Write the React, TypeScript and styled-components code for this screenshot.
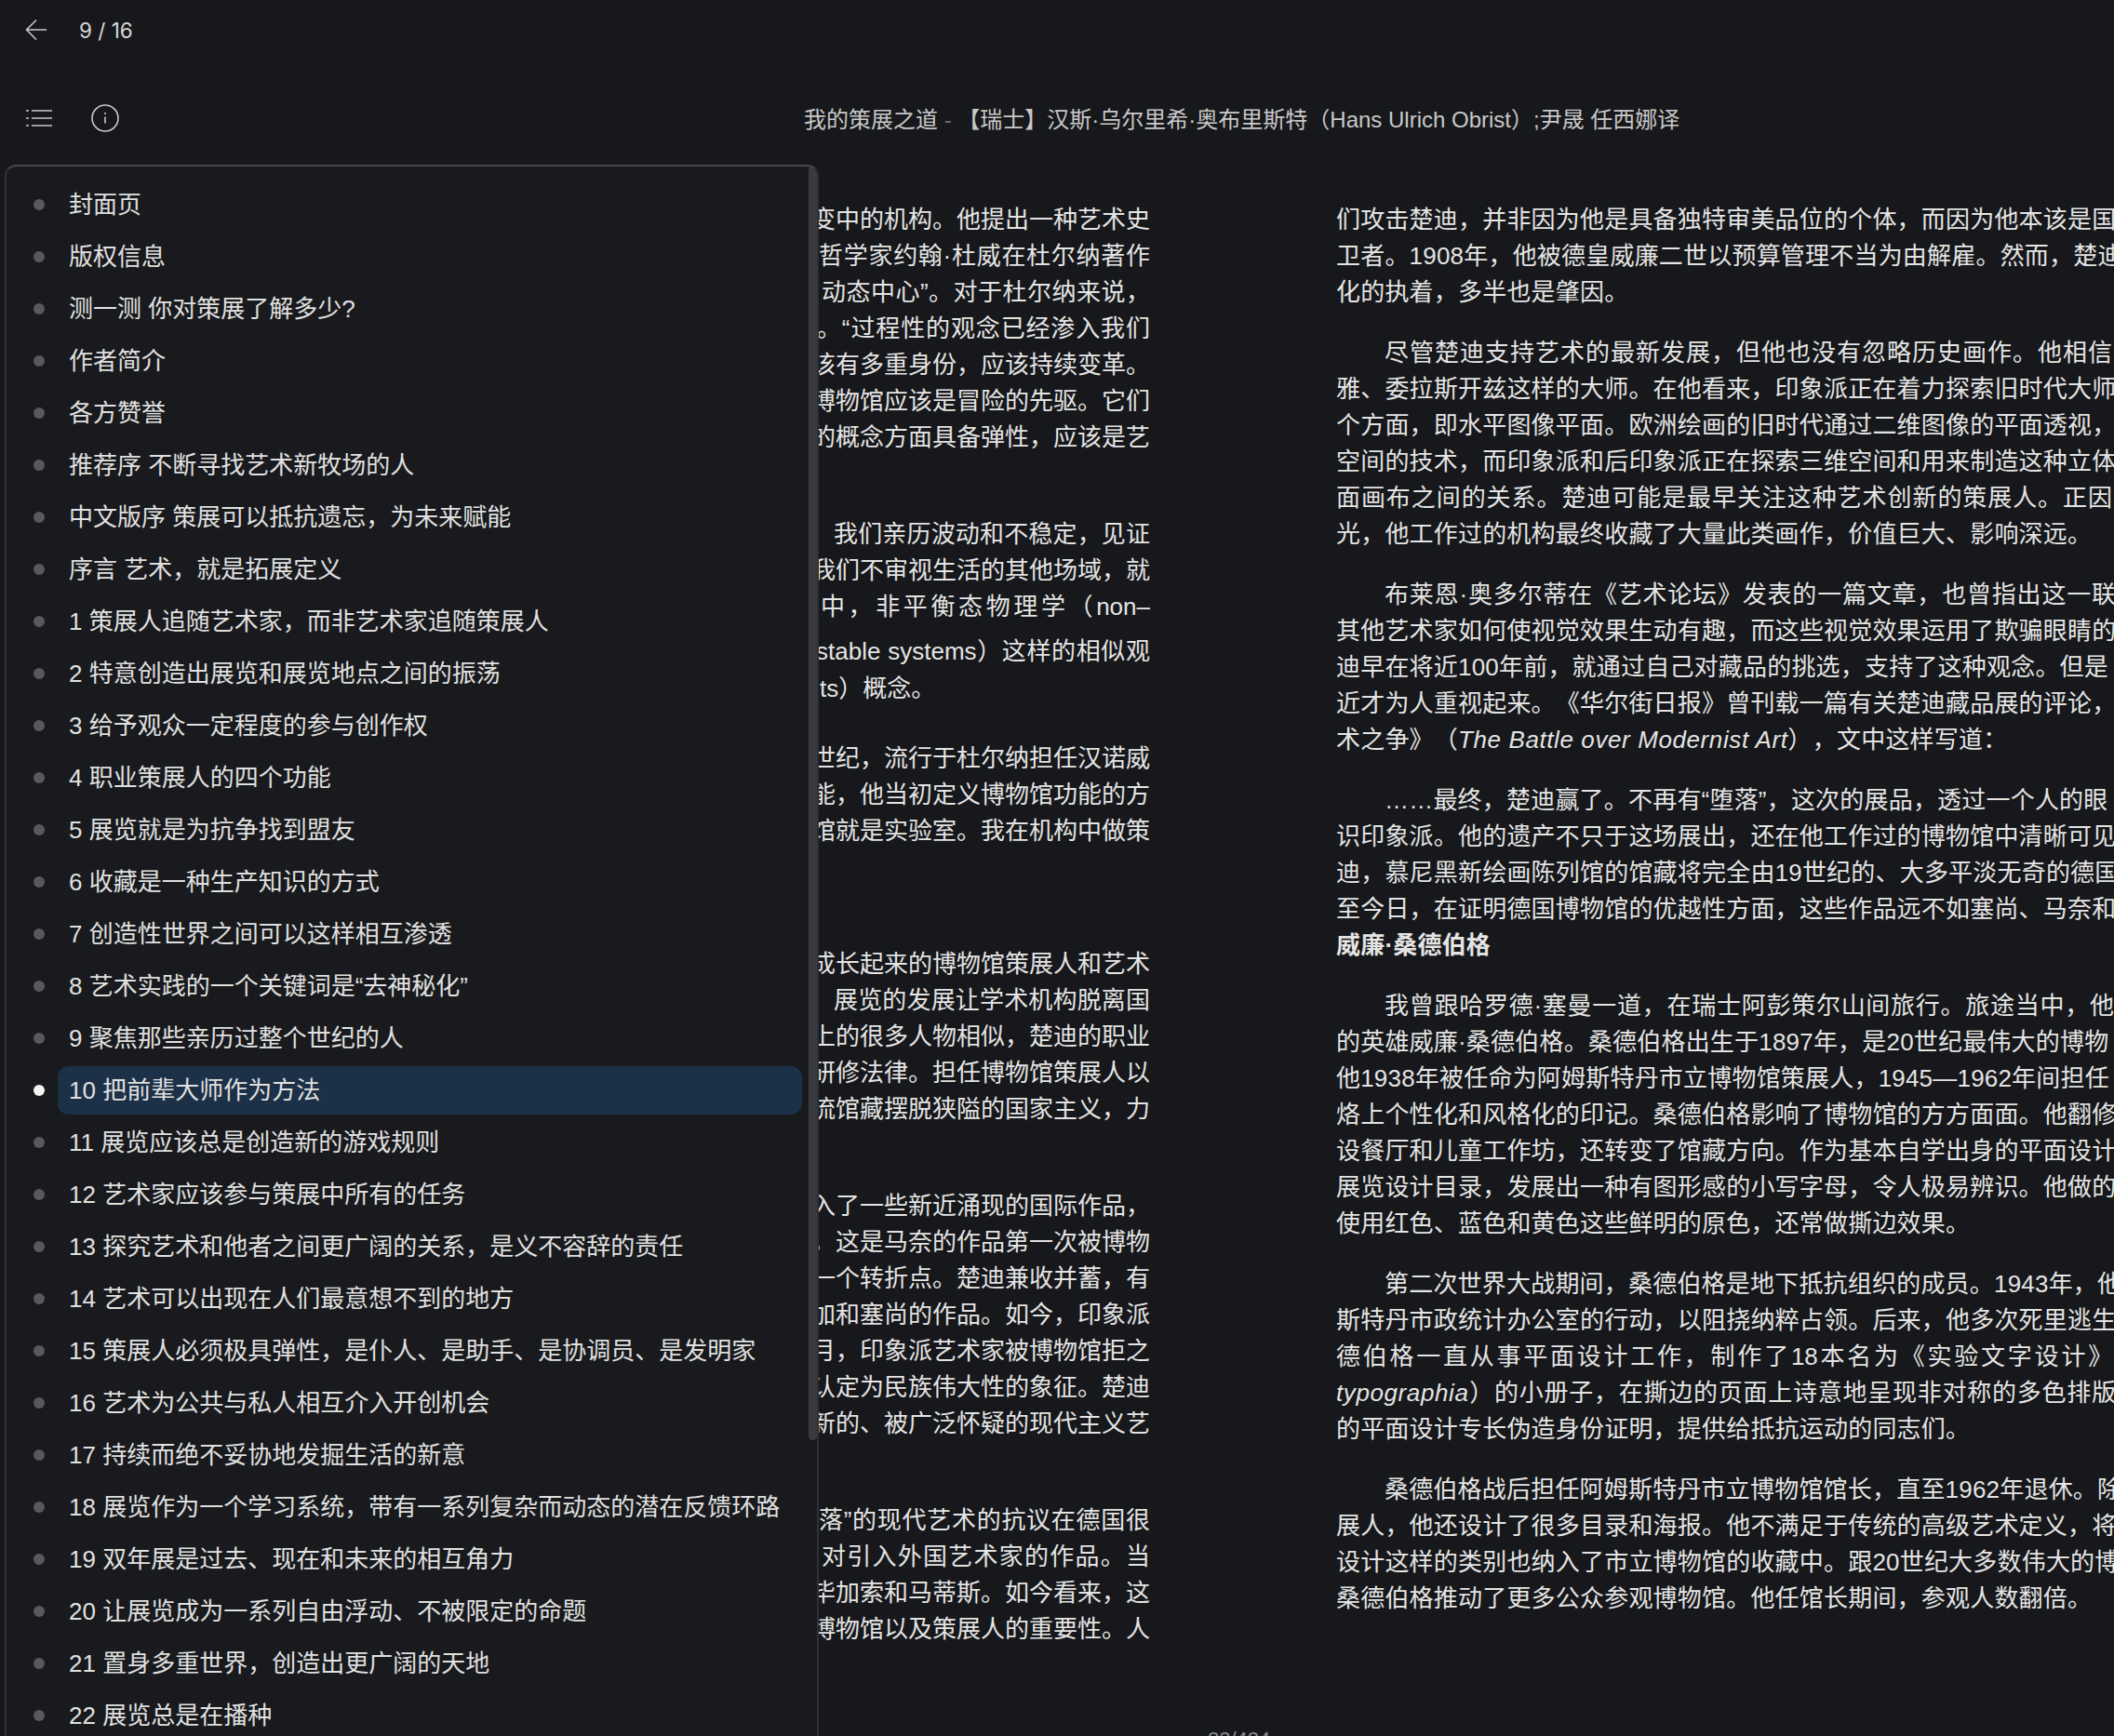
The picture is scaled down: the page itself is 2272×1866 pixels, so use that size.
import React from 'react';
import styled, { createGlobalStyle } from 'styled-components';

const Global = createGlobalStyle`
  html, body { margin: 0; padding: 0; background: #17181b; }
  body {
    font-family: "Liberation Sans", "Noto Sans CJK SC", sans-serif;
    text-spacing-trim: space-all;
    overflow: hidden;
  }
`;

const Page = styled.div`
  position: relative;
  width: 2272px;
  height: 1866px;
  overflow: hidden;
  background: #17181b;
  color: #e4e4e4;
`;

const TopBar = styled.header`
  height: 64px;
  display: flex;
  align-items: center;
  padding-left: 27px;
  gap: 34px;
`;

const PageCount = styled.span`
  font-family: "Inter", sans-serif;
  font-size: 22.5px;
  color: #d8d8d8;
`;

const ToolBar = styled.div`
  height: 64px;
  margin-top: 31px;
  display: flex;
  align-items: center;
  padding-left: 27px;
`;

const InfoWrap = styled.span`
  display: flex;
  margin-left: 41px;
`;

const Title = styled.h1`
  margin: -2px 0 0 736px;
  font-size: 24px;
  font-weight: 400;
  color: #c8c8c8;
  white-space: nowrap;
`;

const TitleDash = styled.span`
  color: #6c6c6c;
`;

const Reader = styled.main`
  display: flex;
  gap: 200px;
  height: 1643px;
  margin-top: 58px;
  padding-left: 872px;
  font-size: 26px;
  line-height: 39px;
`;

const LeftColumn = styled.section`
  flex: none;
  width: 364px;
`;

const RightColumn = styled.section`
  flex: none;
  width: 840px;
`;

const Para = styled.div<{ $gap?: number }>`
  margin-top: ${(p) => p.$gap ?? 0}px;
  margin-bottom: 26px;
`;

const LeftLine = styled.div<{ $w?: number; $in?: number; $mt?: number }>`
  height: 39px;
  white-space: nowrap;
  margin-top: ${(p) => p.$mt ?? 0}px;
  padding-left: ${(p) => p.$in ?? 0}px;
  ${(p) => (p.$w ? `width:${p.$w}px; margin-left:${364 - p.$w}px; text-align-last:justify;` : '')}
`;

const RightLine = styled.div<{ $w?: number; $in?: number }>`
  height: 39px;
  white-space: nowrap;
  letter-spacing: 0.2px;
  padding-left: ${(p) => p.$in ?? 0}px;
  ${(p) => (p.$w ? `box-sizing:border-box;width:${p.$w}px; letter-spacing:0; text-align-last:justify;` : '')}
`;

const Strong = styled.strong`
  font-weight: 700;
`;

const Foreign = styled.i`
  letter-spacing: 0.6px;
`;

const PageNumber = styled.div`
  margin-left: 1298px;
  font-size: 22px;
  line-height: 20px;
  color: #8a8a8a;
`;

const TocPanel = styled.aside`
  position: absolute;
  left: 5px;
  top: 177px;
  width: 875px;
  height: 1720px;
  box-sizing: border-box;
  border: 2px solid #2f3033;
  border-top-color: #48494c;
  border-radius: 12px;
  background: #191a1d;
  padding-top: 13px;
  overflow: hidden;
`;

const TocRow = styled.div`
  height: 56px;
  display: flex;
  align-items: center;
  padding-left: 29px;
`;

const Dot = styled.span<{ $on?: boolean }>`
  flex: none;
  width: 12px;
  height: 12px;
  border-radius: 50%;
  background: ${(p) => (p.$on ? '#f4f4f4' : '#58595c')};
  margin-right: 14px;
`;

const TocLabel = styled.span<{ $on?: boolean }>`
  width: 800px;
  height: 52px;
  box-sizing: border-box;
  padding-left: 12px;
  line-height: 52px;
  font-size: 26px;
  color: #e0e0e0;
  white-space: nowrap;
  border-radius: 12px;
  background: ${(p) => (p.$on ? '#1c3148' : 'transparent')};
`;

const ScrollThumb = styled.div`
  position: absolute;
  right: 0;
  top: 0;
  width: 9px;
  height: 1369px;
  border-radius: 0 0 5px 5px;
  background: #3a3b3e;
`;

const toc = [
  '封面页', '版权信息', '测一测 你对策展了解多少?', '作者简介', '各方赞誉',
  '推荐序 不断寻找艺术新牧场的人', '中文版序 策展可以抵抗遗忘，为未来赋能', '序言 艺术，就是拓展定义',
  '1 策展人追随艺术家，而非艺术家追随策展人', '2 特意创造出展览和展览地点之间的振荡',
  '3 给予观众一定程度的参与创作权', '4 职业策展人的四个功能', '5 展览就是为抗争找到盟友',
  '6 收藏是一种生产知识的方式', '7 创造性世界之间可以这样相互渗透', '8 艺术实践的一个关键词是“去神秘化”',
  '9 聚焦那些亲历过整个世纪的人', '10 把前辈大师作为方法', '11 展览应该总是创造新的游戏规则',
  '12 艺术家应该参与策展中所有的任务', '13 探究艺术和他者之间更广阔的关系，是义不容辞的责任',
  '14 艺术可以出现在人们最意想不到的地方', '15 策展人必须极具弹性，是仆人、是助手、是协调员、是发明家',
  '16 艺术为公共与私人相互介入开创机会', '17 持续而绝不妥协地发掘生活的新意',
  '18 展览作为一个学习系统，带有一系列复杂而动态的潜在反馈环路', '19 双年展是过去、现在和未来的相互角力',
  '20 让展览成为一系列自由浮动、不被限定的命题', '21 置身多重世界，创造出更广阔的天地', '22 展览总是在播种',
];

type L = { t: React.ReactNode; w?: number; in?: number; mt?: number };
const blank = '\u00a0';

const leftParas: { gap?: number; lines: L[] }[] = [
  { lines: [
    { t: '变中的机构。他提出一种艺术史', w: 364 },
    { t: '哲学家约翰·杜威在杜尔纳著作', w: 356 },
    { t: '动态中心”。对于杜尔纳来说，', w: 353 },
    { t: '。“过程性的观念已经渗入我们', w: 358 },
    { t: '该有多重身份，应该持续变革。', w: 364 },
    { t: '博物馆应该是冒险的先驱。它们', w: 364 },
    { t: '的概念方面具备弹性，应该是艺', w: 364 },
    { t: blank },
  ] },
  { lines: [
    { t: '我们亲历波动和不稳定，见证', w: 340 },
    { t: '我们不审视生活的其他场域，就', w: 364 },
    { t: '中，非平衡态物理学（non–', w: 354 },
    { t: 'stable systems）这样的相似观', w: 359, mt: 9 },
    { t: 'ts）概念。', in: 9, mt: 1 },
  ] },
  { gap: 36, lines: [
    { t: '世纪，流行于杜尔纳担任汉诺威', w: 364 },
    { t: '能，他当初定义博物馆功能的方', w: 364 },
    { t: '馆就是实验室。我在机构中做策', w: 364 },
    { t: blank }, { t: blank },
  ] },
  { lines: [
    { t: '成长起来的博物馆策展人和艺术', w: 364 },
    { t: '展览的发展让学术机构脱离国', w: 340 },
    { t: '上的很多人物相似，楚迪的职业', w: 364 },
    { t: '研修法律。担任博物馆策展人以', w: 364 },
    { t: '流馆藏摆脱狭隘的国家主义，力', w: 364 },
    { t: blank },
  ] },
  { lines: [
    { t: '入了一些新近涌现的国际作品，', w: 364 },
    { t: '，这是马奈的作品第一次被博物', w: 364 },
    { t: '一个转折点。楚迪兼收并蓄，有', w: 364 },
    { t: '加和塞尚的作品。如今，印象派', w: 364 },
    { t: '月，印象派艺术家被博物馆拒之', w: 364 },
    { t: '认定为民族伟大性的象征。楚迪', w: 364 },
    { t: '新的、被广泛怀疑的现代主义艺', w: 364 },
    { t: blank },
  ] },
  { lines: [
    { t: '落”的现代艺术的抗议在德国很', w: 356 },
    { t: '对引入外国艺术家的作品。当', w: 353 },
    { t: '毕加索和马蒂斯。如今看来，这', w: 364 },
    { t: '博物馆以及策展人的重要性。人', w: 364 },
  ] },
];

const rightParas: L[][] = [
  [
    { t: '们攻击楚迪，并非因为他是具备独特审美品位的个体，而因为他本该是国' },
    { t: '卫者。1908年，他被德皇威廉二世以预算管理不当为由解雇。然而，楚迪' },
    { t: '化的执着，多半也是肇因。' },
  ],
  [
    { t: '尽管楚迪支持艺术的最新发展，但他也没有忽略历史画作。他相信', in: 52, w: 834 },
    { t: '雅、委拉斯开兹这样的大师。在他看来，印象派正在着力探索旧时代大师' },
    { t: '个方面，即水平图像平面。欧洲绘画的旧时代通过二维图像的平面透视，' },
    { t: '空间的技术，而印象派和后印象派正在探索三维空间和用来制造这种立体' },
    { t: '面画布之间的关系。楚迪可能是最早关注这种艺术创新的策展人。正因', w: 834 },
    { t: '光，他工作过的机构最终收藏了大量此类画作，价值巨大、影响深远。' },
  ],
  [
    { t: '布莱恩·奥多尔蒂在《艺术论坛》发表的一篇文章，也曾指出这一联', in: 52, w: 838 },
    { t: '其他艺术家如何使视觉效果生动有趣，而这些视觉效果运用了欺骗眼睛的' },
    { t: '迪早在将近100年前，就通过自己对藏品的挑选，支持了这种观念。但是' },
    { t: '近才为人重视起来。《华尔街日报》曾刊载一篇有关楚迪藏品展的评论，' },
    { t: <>术之争》（<Foreign>The Battle over Modernist Art</Foreign>），文中这样写道：</> },
  ],
  [
    { t: '……最终，楚迪赢了。不再有“堕落”，这次的展品，透过一个人的眼', in: 52 },
    { t: '识印象派。他的遗产不只于这场展出，还在他工作过的博物馆中清晰可见。' },
    { t: '迪，慕尼黑新绘画陈列馆的馆藏将完全由19世纪的、大多平淡无奇的德国' },
    { t: '至今日，在证明德国博物馆的优越性方面，这些作品远不如塞尚、马奈和' },
    { t: <Strong>威廉·桑德伯格</Strong> },
  ],
  [
    { t: '我曾跟哈罗德·塞曼一道，在瑞士阿彭策尔山间旅行。旅途当中，他', in: 52, w: 836 },
    { t: '的英雄威廉·桑德伯格。桑德伯格出生于1897年，是20世纪最伟大的博物' },
    { t: '他1938年被任命为阿姆斯特丹市立博物馆策展人，1945—1962年间担任' },
    { t: '烙上个性化和风格化的印记。桑德伯格影响了博物馆的方方面面。他翻修' },
    { t: '设餐厅和儿童工作坊，还转变了馆藏方向。作为基本自学出身的平面设计' },
    { t: '展览设计目录，发展出一种有图形感的小写字母，令人极易辨识。他做的' },
    { t: '使用红色、蓝色和黄色这些鲜明的原色，还常做撕边效果。' },
  ],
  [
    { t: '第二次世界大战期间，桑德伯格是地下抵抗组织的成员。1943年，他', in: 52 },
    { t: '斯特丹市政统计办公室的行动，以阻挠纳粹占领。后来，他多次死里逃生' },
    { t: '德伯格一直从事平面设计工作，制作了18本名为《实验文字设计》（Ex', w: 896 },
    { t: <><Foreign>typographia</Foreign>）的小册子，在撕边的页面上诗意地呈现非对称的多色排版</>, w: 838 },
    { t: '的平面设计专长伪造身份证明，提供给抵抗运动的同志们。' },
  ],
  [
    { t: '桑德伯格战后担任阿姆斯特丹市立博物馆馆长，直至1962年退休。除', in: 52 },
    { t: '展人，他还设计了很多目录和海报。他不满足于传统的高级艺术定义，将' },
    { t: '设计这样的类别也纳入了市立博物馆的收藏中。跟20世纪大多数伟大的博' },
    { t: '桑德伯格推动了更多公众参观博物馆。他任馆长期间，参观人数翻倍。' },
  ],
];

const BackIcon = () => (
  <svg width="24" height="24" viewBox="0 0 24 24" fill="none" stroke="#c8c8c8" strokeWidth="1.6">
    <path d="M23 12H2M12 1.5 1.5 12 12 22.5" />
  </svg>
);

const ListIcon = () => (
  <svg width="30" height="22" viewBox="0 0 30 22" fill="none" stroke="#c8c8c8" strokeWidth="1.6">
    <path d="M7 3h22M7 11h22M7 19h22" />
    <path d="M1 3h3M1 11h3M1 19h3" />
  </svg>
);

const InfoIcon = () => (
  <svg width="30" height="30" viewBox="0 0 30 30" fill="none" stroke="#c8c8c8" strokeWidth="1.6">
    <circle cx="15" cy="15" r="14" />
    <path d="M15 13.5v7M15 9v2" />
  </svg>
);

export default function App() {
  return (
    <Page>
      <Global />
      <TopBar>
        <BackIcon />
        <PageCount>9 / 16</PageCount>
      </TopBar>
      <ToolBar>
        <ListIcon />
        <InfoWrap><InfoIcon /></InfoWrap>
        <Title>
          我的策展之道 <TitleDash>-</TitleDash> 【瑞士】汉斯·乌尔里希·奥布里斯特（Hans Ulrich Obrist）;尹晟 任西娜译
        </Title>
      </ToolBar>
      <Reader>
        <LeftColumn>
          {leftParas.map((p, i) => (
            <Para key={i} $gap={p.gap}>
              {p.lines.map((l, j) => (
                <LeftLine key={j} $w={l.w} $in={l.in} $mt={l.mt}>{l.t}</LeftLine>
              ))}
            </Para>
          ))}
        </LeftColumn>
        <RightColumn>
          {rightParas.map((p, i) => (
            <Para key={i}>
              {p.map((l, j) => (
                <RightLine key={j} $w={l.w} $in={l.in}>{l.t}</RightLine>
              ))}
            </Para>
          ))}
        </RightColumn>
      </Reader>
      <PageNumber>23/424</PageNumber>
      <TocPanel>
        {toc.map((label, i) => (
          <TocRow key={i}>
            <Dot $on={i === 17} />
            <TocLabel $on={i === 17}>{label}</TocLabel>
          </TocRow>
        ))}
        <ScrollThumb />
      </TocPanel>
    </Page>
  );
}
